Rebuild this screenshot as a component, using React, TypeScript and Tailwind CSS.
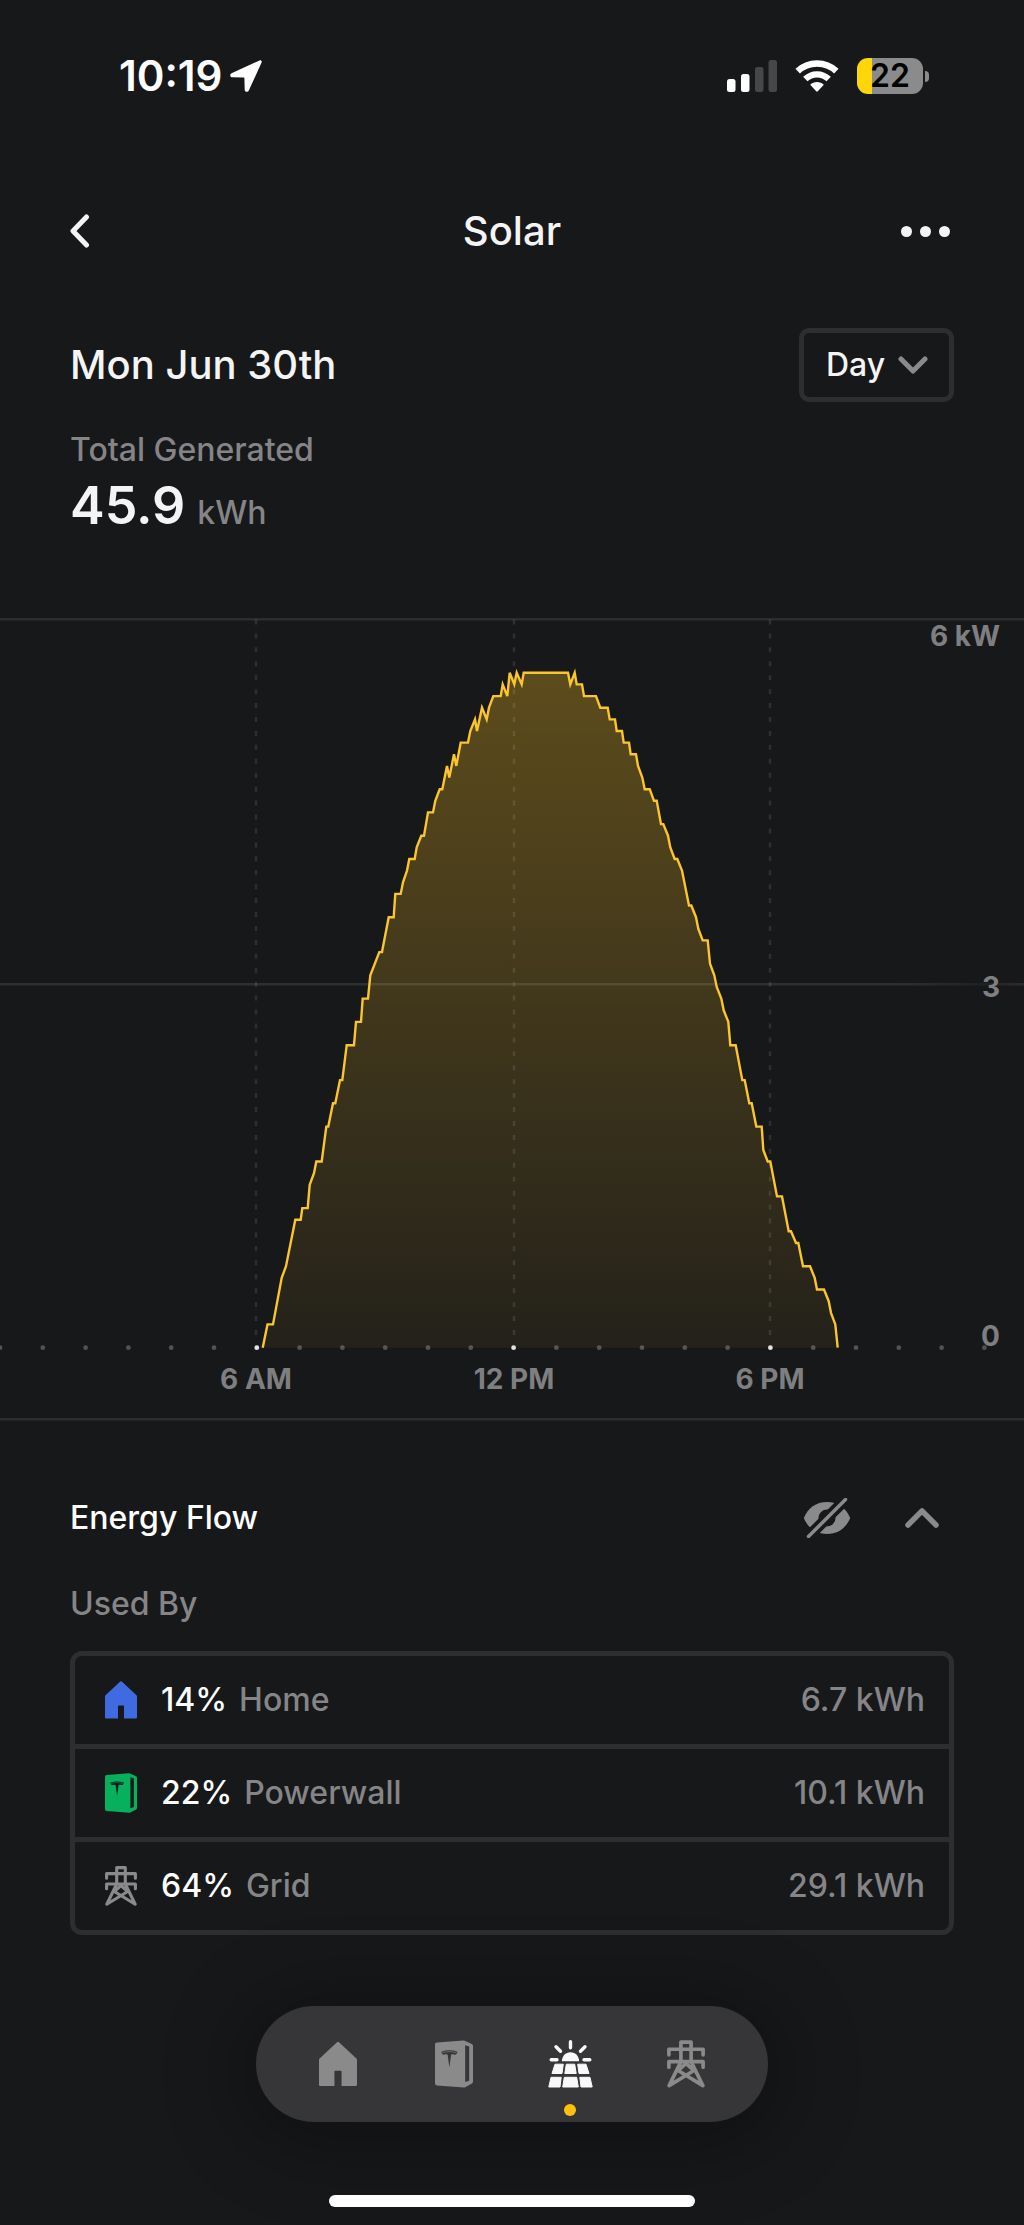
import React, { useState } from 'react';

type IconProps = { className?: string };

const HomeIcon = ({ className }: IconProps) => (
  <svg viewBox="0 0 32 38" className={className} fill="currentColor" aria-hidden="true">
    <path d="M15.2.6a1.1 1.1 0 0 1 1.6 0L31.5 14.3a1.5 1.5 0 0 1 .5 1.1V36.4a1.1 1.1 0 0 1-1.1 1.1H19V25.2a.6.6 0 0 0-.6-.6h-4.8a.6.6 0 0 0-.6.6V37.5H1.1A1.1 1.1 0 0 1 0 36.4V15.4a1.5 1.5 0 0 1 .5-1.1Z" />
  </svg>
);

const PowerwallIcon = ({ className }: IconProps) => (
  <svg viewBox="0 0 32 40" className={className} fill="currentColor" aria-hidden="true">
    <path
      fillRule="evenodd"
      d="M1.6 1.9 24 .2a2 2 0 0 1 1 .2L31 3.2a1.7 1.7 0 0 1 1 1.5V35a1.7 1.7 0 0 1-.9 1.5L25.4 39.5a2 2 0 0 1-1 .2L1.6 38A1.7 1.7 0 0 1 0 36.3V3.600A1.7 1.7 0 0 1 1.6 1.9ZM25.4 4.2V35.2L28.8 34V5.2ZM12.1 22.8 10.6 12C9.300 11.700 8 11.900 7 12.300 6.200 11.700 5.600 10.900 5.300 9.600 9.800 8 14.400 8 18.900 9.600 18.600 10.900 18 11.700 17.200 12.300 16.200 11.900 14.900 11.700 13.600 12Z"
    />
    <path d="M6.2 10.500C10 9.300 14.200 9.300 18 10.500" fill="none" stroke="currentColor" strokeWidth=".5" />
  </svg>
);

const GridIcon = ({ className }: IconProps) => (
  <svg
    viewBox="0 0 32 40"
    className={className}
    fill="none"
    stroke="currentColor"
    strokeWidth="3.1"
    strokeLinecap="round"
    strokeLinejoin="round"
    aria-hidden="true"
  >
    <path d="M11.7 18V1.6H20.3V18L30.2 38.2 9.3 25.5 16 19.500 22.700 25.500 1.800 38.200Z" />
    <path d="M1.600 12.300V7.600H30.400V12.300" />
    <path d="M1.600 22.700V18H30.400V22.700" />
  </svg>
);

const SolarIcon = ({ className }: IconProps) => (
  <svg viewBox="0 0 45 48" className={className} fill="currentColor" aria-hidden="true">
    <path
      d="M22.5 1.8V7.7M8 6.8 12.5 11.3M37 6.8 32.5 11.3M3.2 19.7H9M36 19.7H41.8"
      fill="none"
      stroke="currentColor"
      strokeWidth="3.4"
      strokeLinecap="round"
    />
    <path d="M13.9 21.3C13.9 16 17.5 12.2 22.5 12.2S31.1 16 31.1 21.3Z" />
    <g stroke="currentColor" strokeWidth="1" strokeLinejoin="round">
      <path d="M7 24.2H15.3L14 33.5H4Z" />
      <path d="M18.3 24.2H26.7L28.2 33.5H16.8Z" />
      <path d="M38 24.2H29.7L31 33.5H41Z" />
      <path d="M3 37.3H13.2L12 47H.8Z" />
      <path d="M16.3 37.3H28.7L30.3 47H14.7Z" />
      <path d="M42 37.3H31.8L33 47H44.2Z" />
    </g>
  </svg>
);

const EyeOffIcon = ({ className }: IconProps) => (
  <svg viewBox="0 0 48 40" className={className} aria-hidden="true">
    <path d="M.8 20C5 10 13 4 24 4S43 10 47.2 20C43 30 35 36 24 36S5 30 .8 20Z" fill="currentColor" />
    <circle cx="24" cy="20" r="8.5" fill="#17181a" />
    <circle cx="24" cy="20" r="5" fill="currentColor" />
    <path d="M5.5 38.5 42.5 1.5" stroke="#17181a" strokeWidth="11" />
    <path d="M5.5 38.5 42.5 1.5" stroke="currentColor" strokeWidth="3.5" strokeLinecap="round" />
  </svg>
);

// [x position, output in hundreds of watts]
const READINGS: [number, number][] = [
  [262.7, 0], [267.5, 2], [273, 2], [281.7, 6], [286, 7], [295.3, 11], [300.7, 11], [302.3, 12],
  [307.7, 12], [309.7, 14], [314, 15], [316.3, 16], [321.7, 16], [326.3, 19], [328.3, 19], [333, 21],
  [335.3, 21], [340, 23], [342.3, 23], [346.7, 26], [354, 26], [356, 28], [361, 28], [362.7, 30],
  [368, 30], [370.3, 32], [379.3, 34], [382, 34], [388.7, 37], [393.7, 37], [395.3, 39], [400.7, 39],
  [403, 40], [407, 41], [409.3, 42], [414.7, 42], [416.7, 43], [421.3, 44], [424, 44], [428, 46],
  [433, 46], [435.3, 47], [439.7, 48], [442.3, 48], [447, 50], [449.3, 49], [454, 51], [456.3, 50],
  [460.7, 52], [468, 52], [470.3, 53], [475, 54], [477, 53], [482, 55], [486.7, 54], [489, 55],
  [493.3, 56], [500.7, 56], [502.7, 57], [507.3, 56], [509.7, 58], [514.3, 57], [516.7, 58], [521.7, 57],
  [523.7, 58], [568, 58], [570.3, 57], [574.7, 58], [576.7, 57], [582, 57], [584, 56], [596, 56],
  [600.3, 55], [607.7, 55], [609.7, 54], [615, 54], [616.7, 53], [622, 53], [623.7, 52], [629, 52],
  [630.7, 51], [636, 51], [638, 50], [642.3, 49], [644.7, 48], [649.7, 48], [654, 47], [656.7, 47],
  [661, 45], [663.3, 45], [668, 44], [670.3, 43], [674.7, 42], [677.3, 42], [682, 41], [689, 38],
  [691.3, 38], [696, 37], [698.3, 36], [702.7, 35], [707.7, 35], [710, 33], [714.3, 32], [716.7, 31],
  [721.3, 30], [723.7, 29], [728.3, 28], [730.3, 26], [735.7, 26], [742.3, 23], [744.7, 23], [749.3, 21],
  [751.7, 21], [756.3, 19], [761.7, 19], [763.3, 17], [767.7, 16], [770.3, 16], [777, 13], [782, 13],
  [788.7, 10], [791, 10], [796, 9], [798.3, 9], [803, 7], [810, 7], [814.7, 6], [817, 5],
  [824, 5], [828.7, 4], [831, 3], [835.3, 2], [837.7, 0],
];

const BASELINE = 730.7;
const STEP = 11.636;
const HOURS = Array.from({ length: 24 }, (_, i) => i);
const MARKS = [
  { x: 256, label: '6 AM' },
  { x: 514, label: '12 PM' },
  { x: 770, label: '6 PM' },
];

const SolarChart = () => {
  const line = READINGS.map(([x, v], i) => `${i ? 'L' : 'M'}${x} ${(BASELINE - v * STEP).toFixed(1)}`).join('');

  return (
    <svg viewBox="0 0 1024 804" className="block w-full" role="img" aria-label="Solar output over the day">
      <defs>
        <linearGradient id="solar-fill" x1="0" y1="0" x2="0" y2="1">
          <stop offset="0" stopColor="#ffc420" stopOpacity="0.3" />
          <stop offset="1" stopColor="#ffc420" stopOpacity="0.055" />
        </linearGradient>
        <linearGradient id="mid-line" gradientUnits="userSpaceOnUse" x1="0" y1="0" x2="1024" y2="0">
          <stop offset="0.88" stopColor="#fff" stopOpacity="0.1" />
          <stop offset="0.96" stopColor="#fff" stopOpacity="0.04" />
          <stop offset="1" stopColor="#fff" stopOpacity="0.09" />
        </linearGradient>
      </defs>

      <path d={`${line}Z`} fill="url(#solar-fill)" />
      <rect x="0" y="1" width="1024" height="2.5" fill="#2c2d2f" />
      <rect x="0" y="366" width="1024" height="2.5" fill="url(#mid-line)" />
      {MARKS.map((m) => (
        <path
          key={m.label}
          d={`M${m.x} 2.5V721`}
          stroke="#fff"
          strokeOpacity="0.1"
          strokeWidth="2.5"
          strokeDasharray="5 8.93"
        />
      ))}
      <path d={line} fill="none" stroke="#fac52f" strokeWidth="2.4" />

      {HOURS.map((h) => {
        const major = h === 6 || h === 12 || h === 18;
        return (
          <circle
            key={h}
            cx={h * 42.8}
            cy={BASELINE}
            r="2.4"
            fill={major ? '#e3e3e3' : '#fff'}
            fillOpacity={major ? 1 : 0.25}
          />
        );
      })}

      <g className="fill-[#7f7f81] text-[28px] font-bold">
        {MARKS.map((m) => (
          <text key={m.label} x={m.x} y="772" textAnchor="middle">
            {m.label}
          </text>
        ))}
        <text x="1000" y="29" textAnchor="end">6 kW</text>
        <text x="1000" y="380" textAnchor="end">3</text>
        <text x="1000" y="729" textAnchor="end">0</text>
      </g>
      <rect x="0" y="801" width="1024" height="2.5" fill="#2c2d2f" />
    </svg>
  );
};

const StatusBar = () => (
  <div className="flex h-[152px] items-center justify-between pr-[95px] pl-[119px]">
    <div className="flex items-center gap-2">
      <span className="text-[42px] leading-[48px] font-semibold text-white">10:19</span>
      <svg viewBox="0 0 32 32" className="size-8" fill="#fff" aria-hidden="true">
        <path d="M29.5.4 1.5 13.2C-.5 14.2 0 17.3 2.3 17.3L13.8 17.6C14.2 17.6 14.4 17.8 14.4 18.2L14.7 29.7C14.7 32 17.8 32.5 18.8 30.5L31.6 2.5C32.2 1.1 30.9-.2 29.5.4Z" />
      </svg>
    </div>
    <div className="flex items-center gap-[18px]">
      <svg viewBox="0 0 50 34" className="h-[34px] w-[50px]" fill="#fff" aria-hidden="true">
        <rect x="0" y="20" width="8.5" height="13" rx="2.5" />
        <rect x="14" y="15" width="8.5" height="18" rx="2.5" />
        <rect x="28" y="8" width="8.5" height="25" rx="2.5" fill="#464749" />
        <rect x="41.5" y="1" width="8.5" height="32" rx="2.5" fill="#464749" />
      </svg>
      <svg viewBox="0 0 44 34" className="h-[34px] w-[44px]" fill="none" stroke="#fff" aria-hidden="true">
        <path d="M2.7 12.2C13.5 2 30.5 2 41.3 12.2" strokeWidth="6.5" />
        <path d="M10.3 20C17 13.7 27 13.7 33.7 20" strokeWidth="6.3" />
        <path d="M15.2 25.8C19 22.2 25 22.2 28.8 25.8L22.8 32.3Q22 33 21.2 32.3Z" fill="#fff" stroke="none" />
      </svg>
      <div className="flex items-center gap-[2px]">
        <div className="flex h-9 w-[66px] items-center justify-center rounded-[11px] bg-linear-to-r from-[#ffd60a] from-23% to-[#8b8b8c] to-23%">
          <span className="text-[32px] leading-9 font-semibold text-black">22</span>
        </div>
        <div className="h-[11px] w-1 rounded-r-full bg-[#8b8b8c]" />
      </div>
    </div>
  </div>
);

const USED_BY = [
  { name: 'Home', percent: '14%', energy: '6.7 kWh', icon: <HomeIcon className="h-[38px] w-8 text-[#3f6ae0]" /> },
  { name: 'Powerwall', percent: '22%', energy: '10.1 kWh', icon: <PowerwallIcon className="h-10 w-8 text-[#07b05c]" /> },
  { name: 'Grid', percent: '64%', energy: '29.1 kWh', icon: <GridIcon className="h-10 w-8 text-[#8a8a8c]" /> },
];

const TABS = [
  { name: 'Home', icon: <HomeIcon className="h-[46px] w-[38px]" /> },
  { name: 'Powerwall', icon: <PowerwallIcon className="h-12 w-[38px]" /> },
  { name: 'Solar', icon: <SolarIcon className="h-12 w-[45px]" /> },
  { name: 'Grid', icon: <GridIcon className="h-12 w-[38px]" /> },
];

const App = () => {
  const [period, setPeriod] = useState('Day');
  const [open, setOpen] = useState(true);
  const [tab, setTab] = useState('Solar');

  return (
    <div className="min-h-screen bg-[#17181a] font-['Inter',sans-serif] text-[32px] leading-10 font-medium text-[#f4f4f5]">
      <StatusBar />

      <header className="grid h-[158px] grid-cols-3 items-center px-[70px]">
        <button type="button" aria-label="Back" className="justify-self-start">
          <svg viewBox="0 0 20 34" className="h-[34px] w-5" fill="none" stroke="currentColor" strokeWidth="5" strokeLinecap="round" strokeLinejoin="round">
            <path d="M16.5 3 3 17 16.5 31" />
          </svg>
        </button>
        <h1 className="text-center text-[40px] leading-[48px]">Solar</h1>
        <button type="button" aria-label="More" className="flex gap-2 justify-self-end pr-1">
          <span className="size-[11px] rounded-full bg-[#f4f4f5]" />
          <span className="size-[11px] rounded-full bg-[#f4f4f5]" />
          <span className="size-[11px] rounded-full bg-[#f4f4f5]" />
        </button>
      </header>

      <main>
        <section className="px-[70px] pt-[18px]">
          <div className="flex items-center justify-between">
            <h2 className="text-[40px] leading-[48px]">Mon Jun 30th</h2>
            <div className="relative">
              <select
                aria-label="Period"
                value={period}
                onChange={(e) => setPeriod(e.target.value)}
                className="block h-[74px] w-[155px] appearance-none rounded-[10px] border-[5px] border-[#2d2e30] bg-transparent pl-[22px]"
              >
                <option>Day</option>
                <option>Week</option>
                <option>Month</option>
                <option>Year</option>
              </select>
              <svg viewBox="0 0 30 18" className="pointer-events-none absolute top-7 right-[26px] h-[18px] w-[30px]" fill="none" stroke="#8a8a8c" strokeWidth="5" strokeLinecap="round" strokeLinejoin="round">
                <path d="M3 3 15 15 27 3" />
              </svg>
            </div>
          </div>
          <p className="mt-7 text-[#858587]">Total Generated</p>
          <p className="mt-1 flex h-16 items-baseline gap-3">
            <span className="text-[52px] leading-[64px] font-semibold">45.9</span>
            <span className="text-[#858587]">kWh</span>
          </p>
        </section>

        <div className="mt-[79px]">
          <SolarChart />
        </div>

        <section className="px-[70px] pt-[77px]">
          <div className="flex items-center justify-between">
            <h2 className="text-white">Energy Flow</h2>
            <div className="flex items-center gap-[54px] pr-[15px] text-[#8a8a8c]">
              <button type="button" aria-label="Hide idle sources">
                <EyeOffIcon className="h-10 w-12" />
              </button>
              <button type="button" aria-label="Toggle energy flow" aria-expanded={open} onClick={() => setOpen(!open)}>
                <svg viewBox="0 0 34 20" className="h-5 w-[34px]" fill="none" stroke="currentColor" strokeWidth="5.5" strokeLinecap="round" strokeLinejoin="round">
                  <path d="M3 17 17 3 31 17" />
                </svg>
              </button>
            </div>
          </div>

          {open && (
            <>
              <h3 id="used-by" className="mt-[46px] text-[#858587]">Used By</h3>
              <div className="mt-[27px] rounded-xl border-[5px] border-[#2d2e30]">
                <table aria-labelledby="used-by" className="w-full border-separate border-spacing-0">
                  <tbody>
                    {USED_BY.map((row) => (
                      <tr key={row.name} className="group">
                        <th
                          scope="row"
                          className="h-[93px] border-b-[5px] border-[#2d2e30] p-0 pl-[30px] font-medium group-last:h-[88px] group-last:border-b-0"
                        >
                          <div className="flex items-center">
                            {row.icon}
                            <span className="ml-6 text-white">{row.percent}</span>
                            <span className="ml-3 text-[#858587]">{row.name}</span>
                          </div>
                        </th>
                        <td className="border-b-[5px] border-[#2d2e30] p-0 pr-6 text-right text-[#858587] group-last:border-b-0">
                          {row.energy}
                        </td>
                      </tr>
                    ))}
                  </tbody>
                </table>
              </div>
            </>
          )}
        </section>
      </main>

      <nav className="mx-auto mt-[71px] flex h-[116px] w-[512px] rounded-full bg-[#363638] px-6 shadow-[0_8px_80px_16px_rgba(0,0,0,0.3)]">
        {TABS.map((t) => (
          <button
            key={t.name}
            type="button"
            aria-label={t.name}
            onClick={() => setTab(t.name)}
            className={`relative flex flex-1 items-center justify-center ${tab === t.name ? 'text-[#f8f8f9]' : 'text-[#8a8a8a]'}`}
          >
            {t.icon}
            {tab === t.name && (
              <span className="absolute bottom-1.5 left-1/2 size-3 -translate-x-1/2 rounded-full bg-[#fdc011]" />
            )}
          </button>
        ))}
      </nav>

      <div className="pt-[73px] pb-[18px]">
        <div className="mx-auto h-3 w-[366px] rounded-full bg-white" />
      </div>
    </div>
  );
};

export default App;
